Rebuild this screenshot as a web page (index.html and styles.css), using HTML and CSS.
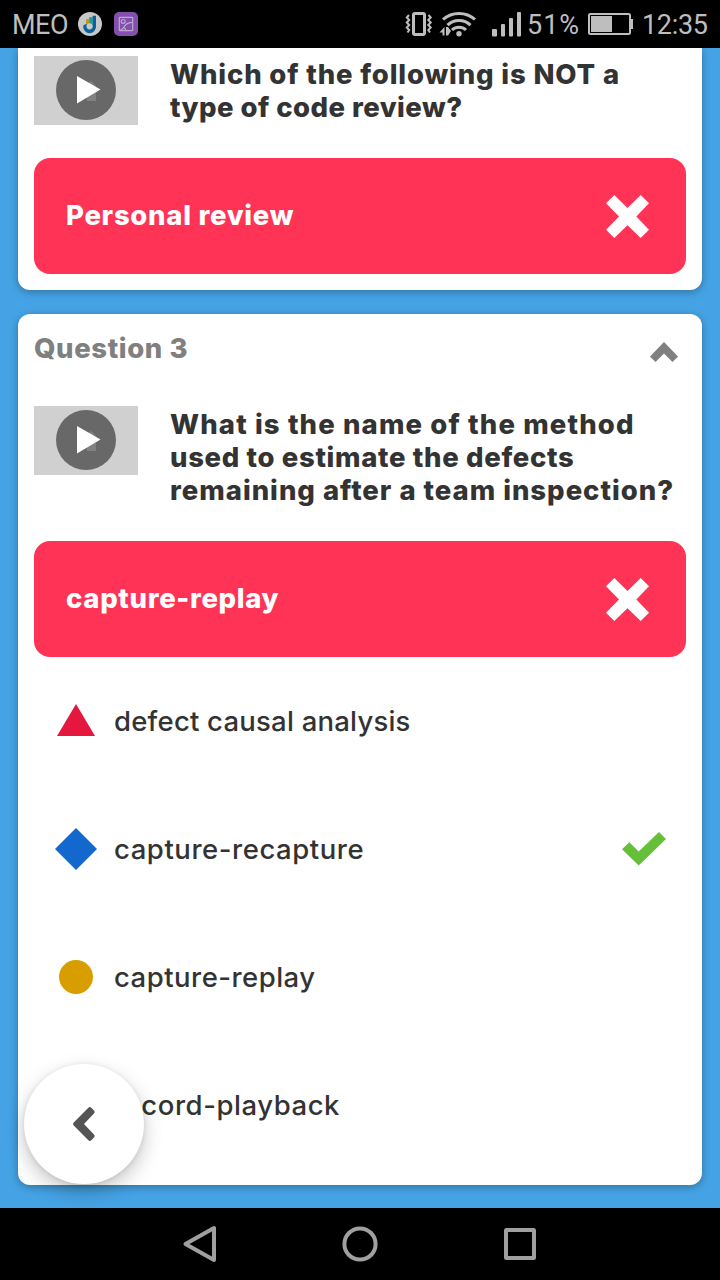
FILE: index.html
```
<!DOCTYPE html>
<html lang="en">
<head>
<meta charset="utf-8">
<title>Quiz review</title>
<link rel="stylesheet" href="styles.css">
</head>
<body>
<div class="screen">
  <header class="status">
    <span class="carrier">MEO</span>
    <svg class="app-logo" viewBox="0 0 24 24">
      <circle cx="12" cy="12" r="12" fill="#c8c8c8"/>
      <path d="M8 7h3.200v6H8z" fill="#bd9824"/>
      <path d="M11.200 5.200h3.400v7h-3.400z" fill="#16a38e"/>
      <path d="M14.600 3.800H18V14.800a6.400 6.400 0 1 1-12.800 0c0-1.500 1-2.500 2.900-2.500h6.500z" fill="#0b6299"/>
      <circle cx="11.600" cy="14.300" r="3.100" fill="#c8c8c8"/>
    </svg>
    <svg class="app-photo" viewBox="0 0 24 24">
      <rect width="24" height="24" rx="5" fill="#844fae"/>
      <g fill="none" stroke="#bea8cf" stroke-width="1.2">
        <rect x="5.3" y="5.3" width="13.4" height="13.4" rx=".8"/>
        <circle cx="9.2" cy="9.4" r="1.9"/>
        <path d="M5.500 18.500c3-.2 3.700-2.200 5-4.300 1.700-2.700 4-3.900 8.200-3.900M9.700 15.700c1 .2 2 1.200 2.200 2.800"/>
      </g>
    </svg>
    <svg class="indicators" viewBox="0 0 116 26">
      <g fill="none" stroke="#bebebe">
        <rect x="7.500" y="2.500" width="11" height="21" rx="1.500" stroke-width="3"/>
        <path stroke-width="2" d="M3 4 .8 6.500 3.200 9 .8 11.500 3.200 14 .8 16.500 3.200 19 1.500 21.500M22.500 4 24.700 6.500 22.300 9 24.700 11.500 22.300 14 24.700 16.500 22.300 19 24 21.500"/>
        <path stroke-width="3" d="M37 8.500a24 24 0 0 1 32 0M41.500 14.200a16.500 16.500 0 0 1 23 0M46 19a10 10 0 0 1 14 0"/>
      </g>
      <g fill="#bebebe">
        <circle cx="53" cy="22.700" r="2.700"/>
        <path d="M33.500 21.500l5-5.500v8.500h-2v-3zM40 24.500V16h2l3 4-3 4.500z"/>
        <rect x="86" y="18" width="5" height="7.500" rx="1"/>
        <rect x="95" y="13" width="4" height="12.500" rx="1"/>
        <rect x="103" y="7" width="4" height="18.500" rx="1"/>
        <rect x="111" y="1" width="4" height="24.500" rx="1"/>
      </g>
    </svg>
    <span class="percent">51%</span>
    <svg class="battery" viewBox="0 0 46 22">
      <rect x="1" y="1" width="41" height="20" rx="1.500" fill="none" stroke="#bebebe" stroke-width="2"/>
      <path d="M3 3h21v16H3zM43 6h2v10h-2z" fill="#bebebe"/>
    </svg>
    <span class="clock">12:35</span>
  </header>

  <main class="content">
    <section class="card card-first">
      <div class="question">
        <div class="media"><svg class="play" viewBox="0 0 60 60">
          <circle cx="30" cy="30" r="30" fill="#686868"/>
          <path d="M31 24l4-3 5 5v15H31z" fill="#818181"/>
          <path d="M21 16v27.500L44.500 29.500z" fill="#fff"/>
        </svg></div>
        <h2 class="prompt"><span class="line q1">Which of the following is NOT a</span> <span class="line q2">type of code review?</span></h2>
      </div>
      <div class="answer">
        <span class="answer-review">Personal review</span>
        <svg class="cross" viewBox="0 0 43 43"><path d="M8.300 0 21.500 12.900 34.700 0 43 8.200 30.300 21.500 43 34.800 34.700 43 21.500 30.300 8.300 43 0 34.800 13 21.500 0 8.200z"/></svg>
      </div>
    </section>

    <section class="card">
      <div class="card-head">
        <h3 class="title">Question 3</h3>
        <svg class="collapse" viewBox="0 0 28 20"><path d="M14 0 28 14.500 22.500 20 14 11.500 5.500 20 0 14.500z"/></svg>
      </div>
      <div class="question">
        <div class="media"><svg class="play" viewBox="0 0 60 60">
          <circle cx="30" cy="30" r="30" fill="#686868"/>
          <path d="M31 24l4-3 5 5v15H31z" fill="#818181"/>
          <path d="M21 16v27.500L44.500 29.500z" fill="#fff"/>
        </svg></div>
        <h2 class="prompt"><span class="line q3">What is the name of the method</span> <span class="line q4">used to estimate the defects</span> <span class="line q5">remaining after a team inspection?</span></h2>
      </div>
      <div class="answer">
        <span class="answer-replay">capture-replay</span>
        <svg class="cross" viewBox="0 0 43 43"><path d="M8.300 0 21.500 12.900 34.700 0 43 8.200 30.300 21.500 43 34.800 34.700 43 21.500 30.300 8.300 43 0 34.800 13 21.500 0 8.200z"/></svg>
      </div>
      <ul class="choices">
        <li class="choice">
          <svg class="shape" viewBox="0 0 42 42"><path d="M21 4 40 36H2z" fill="#e5173e"/></svg>
          <span class="c1">defect causal analysis</span>
        </li>
        <li class="choice">
          <svg class="shape" viewBox="0 0 42 42"><path d="M21 0 42 21 21 42 0 21z" fill="#1368ce"/></svg>
          <span class="c2">capture-recapture</span>
          <svg class="check" viewBox="0 0 44 34"><path d="M0 17.300 7.300 10.300 16.700 19.500 37 0 44 7 16.700 33.500z"/></svg>
        </li>
        <li class="choice">
          <svg class="shape" viewBox="0 0 42 42"><circle cx="21" cy="21" r="17" fill="#d89e00"/></svg>
          <span class="c3">capture-replay</span>
        </li>
        <li class="choice">
          <svg class="shape" viewBox="0 0 42 42"><path d="M5 5h32v32H5z" fill="#26890c"/></svg>
          <span class="c4">record-playback</span>
        </li>
      </ul>
    </section>

    <button class="back" aria-label="Back">
      <svg class="back-icon" viewBox="0 0 22 34"><path d="M.5 15.800 15.300.7q1.500-1.400 3 0l2.700 2.700q1.500 1.600 0 3.100L11 17l10 10.500q1.500 1.500 0 3.100l-2.700 2.700q-1.500 1.400-3 0L.5 18.200q-1-1.200 0-2.400z" fill="#555"/></svg>
    </button>
  </main>

  <nav class="nav">
    <svg class="nav-icon" viewBox="0 0 40 40"><path d="M34 4v32L5.500 20z"/></svg>
    <svg class="nav-icon" viewBox="0 0 40 40"><circle cx="20" cy="20" r="15.600"/></svg>
    <svg class="nav-icon" viewBox="0 0 40 40"><rect x="6" y="6" width="28" height="28" rx=".5"/></svg>
  </nav>
</div>
</body>
</html>
```

FILE: styles.css
```
* { box-sizing: border-box; }
body { margin: 0; }
svg { display: block; flex: none; overflow: visible; }
h2, h3, ul { margin: 0; padding: 0; }

.screen {
  width: 720px;
  height: 1280px;
  display: flex;
  flex-direction: column;
  overflow: hidden;
  background: #45a3e5;
  color: #333;
  font: 500 27.5px/33px Inter, "Open Sans", sans-serif;
}

.status {
  flex: none;
  height: 48px;
  padding: 0 11px 0 12px;
  display: flex;
  align-items: center;
  background: #000;
  color: #bebebe;
  font: 400 27px/32px Roboto, sans-serif;
  white-space: nowrap;
}
.carrier { width: 66px; padding-top: 2px; letter-spacing: -.5px; }
.app-logo { width: 24px; height: 24px; margin-right: 12px; }
.app-photo { width: 24px; height: 24px; }
.indicators { width: 116px; height: 26px; margin-left: 268px; }
.percent { width: 66px; padding-left: 5px; padding-top: 2px; letter-spacing: 1px; }
.battery { width: 46px; height: 22px; }
.clock { margin-left: 8px; padding-top: 2px; letter-spacing: -0.3px; }

.content {
  flex: 1;
  position: relative;
  padding: 0 18px;
  display: flex;
  flex-direction: column;
  gap: 24px;
  overflow: hidden;
}
.card {
  padding: 0 16px 16px;
  background: #fff;
  border-radius: 12px;
  box-shadow: 0 2px 8px rgba(0, 0, 0, .3);
}
.card-first { padding-top: 8px; border-radius: 0 0 12px 12px; }
.card-head {
  height: 92px;
  padding: 18px 8px 0 0;
  display: flex;
  justify-content: space-between;
}
.title { color: #808080; font-size: 27.5px; font-weight: 800; letter-spacing: .6px; }
.collapse { width: 28px; height: 20px; margin-top: 10px; fill: #808080; }

.question { display: flex; gap: 32px; }
.media {
  flex: none;
  width: 104px;
  height: 69px;
  padding-top: 4px;
  background: #d0d0d0;
}
.play { width: 60px; height: 60px; margin: 0 auto; }
.prompt { padding-top: 2px; font-size: 27.5px; font-weight: 800; white-space: nowrap; }
.line { display: block; }
.q1 { letter-spacing: .85px; }
.q2 { letter-spacing: .46px; }
.q3 { letter-spacing: 1.13px; }
.q4 { letter-spacing: .66px; }
.q5 { letter-spacing: .98px; }

.answer {
  height: 116px;
  margin-top: 34px;
  padding: 0 37px 0 32px;
  display: flex;
  align-items: center;
  justify-content: space-between;
  border-radius: 16px;
  background: #ff3355;
  color: #fff;
  font-weight: 800;
}
.answer span { padding-bottom: 1px; }
.card-first .answer { margin-top: 33px; }
.answer-review { letter-spacing: .72px; }
.answer-replay { letter-spacing: .67px; }
.cross { width: 43px; height: 43px; fill: #fff; }

.choices { list-style: none; }
.choice {
  height: 128px;
  padding: 0 20px 0 21px;
  display: flex;
  align-items: center;
  gap: 17px;
}
.shape { width: 42px; height: 42px; }
.check { width: 44px; height: 34px; margin-left: auto; fill: #66bf39; }
.c1 { letter-spacing: .22px; }
.c2 { letter-spacing: .55px; }
.c3 { letter-spacing: .48px; }
.c4 { letter-spacing: .55px; }

.back {
  position: absolute;
  left: 24px;
  bottom: 24px;
  width: 120px;
  height: 120px;
  padding: 0;
  display: grid;
  place-items: center;
  border: 0;
  border-radius: 50%;
  background: #fff;
  box-shadow: 0 8px 20px rgba(0, 0, 0, .22), 0 1px 5px rgba(0, 0, 0, .1);
}
.back-icon { width: 22px; height: 34px; }

.nav {
  flex: none;
  height: 72px;
  display: flex;
  align-items: center;
  justify-content: center;
  gap: 120px;
  background: #000;
}
.nav-icon {
  width: 40px;
  height: 40px;
  fill: none;
  stroke: #a0a0a0;
  stroke-width: 4;
  stroke-linejoin: round;
}
```
